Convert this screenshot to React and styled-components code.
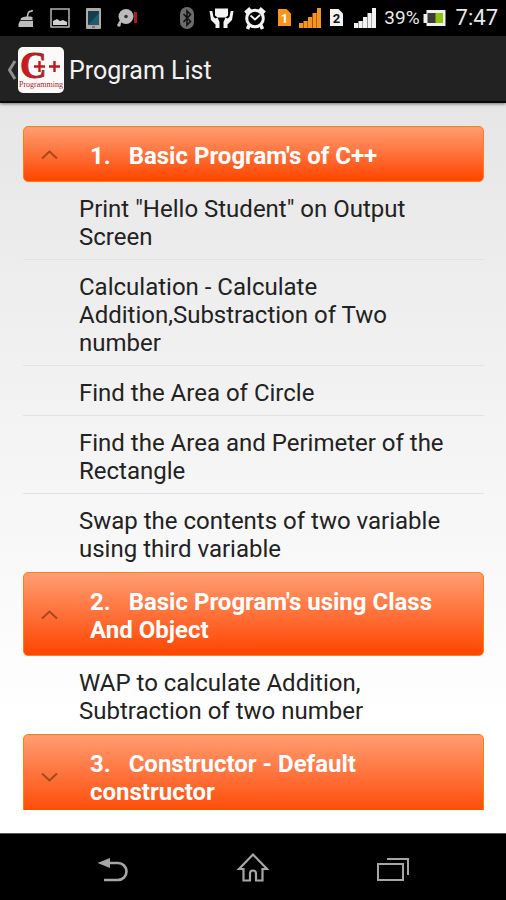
import { useState } from "react";
import styled, { createGlobalStyle } from "styled-components";

const GlobalStyle = createGlobalStyle`
  * {
    box-sizing: border-box;
  }

  body {
    margin: 0;
    font-family: Roboto, "Liberation Sans", sans-serif;
    background: #000;
  }

  h1, h2, ul {
    margin: 0;
    padding: 0;
  }
`;

const Screen = styled.div`
  display: flex;
  flex-direction: column;
  height: 100vh;
`;

const StatusBar = styled.div`
  display: flex;
  justify-content: space-between;
  align-items: center;
  height: 36px;
  padding: 0 8px 0 17px;
  background: #000;
  color: #e8e8e8;
`;

const IconGroup = styled.div`
  display: flex;
  align-items: center;
  gap: ${(props) => props.$gap}px;

  svg {
    display: block;
  }
`;

const Percent = styled.span`
  font-size: 19px;
  line-height: 36px;
`;

const Clock = styled.span`
  padding-left: 7px;
  font-size: 22px;
  line-height: 36px;
`;

const ActionBar = styled.header`
  position: relative;
  z-index: 1;
  display: flex;
  align-items: center;
  gap: 5px;
  height: 67px;
  padding: 2px 0 0 7px;
  background: #222;
  border-bottom: 2px solid #0a0a0a;
  box-shadow: 0 1px 3px rgba(0, 0, 0, 0.5);
`;

const UpLink = styled.a`
  display: flex;
  align-items: center;

  svg {
    display: block;
  }
`;

const Title = styled.h1`
  padding-top: 2px;
  color: #f3f3f3;
  font-size: 25px;
  font-weight: 400;
  line-height: 32px;
`;

const Content = styled.main`
  flex: 1;
  display: flex;
  min-height: 0;
  padding: 23px 22px 23px 23px;
  background: linear-gradient(#e6e6e6, #f2f2f2 40%, #fff 85%);
`;

const ProgramList = styled.div`
  flex: 1;
  overflow-y: auto;
  scrollbar-width: none;
`;

const GroupHeader = styled.button`
  display: flex;
  align-items: center;
  width: 100%;
  padding: 14px 16px 12px;
  border: 1px solid #ff7f0e;
  border-radius: 5px;
  background: linear-gradient(#ff9d73, #ff4500);
  color: #fff;
  font: bold 24px/28px Roboto, "Liberation Sans", sans-serif;
  text-align: left;
  cursor: pointer;

  svg {
    flex: none;
    margin-right: 32px;
  }
`;

const GroupTitle = styled.span`
  flex: 1;
  padding-top: 1px;
  margin-bottom: -1px;
  white-space: pre-wrap;
`;

const Items = styled.ul`
  list-style: none;
`;

const Item = styled.li`
  border-bottom: 1px solid #e2e2e2;

  &:last-child {
    border-bottom-color: transparent;
  }
`;

const ItemLink = styled.a`
  display: block;
  padding: 13px 16px 8px 56px;
  color: #222;
  font-size: 24px;
  line-height: 28px;
  text-decoration: none;
`;

const NavBar = styled.nav`
  display: flex;
  justify-content: center;
  gap: 76px;
  height: 67px;
  border-top: 1px solid #555;
  background: #000;
`;

const NavButton = styled.button`
  display: flex;
  align-items: center;
  justify-content: center;
  width: 64px;
  padding: 4px 0 0;
  border: 0;
  background: none;
`;

const groups = [
  {
    title: "Basic Program's of C++",
    items: [
      "Print \"Hello Student\" on Output Screen",
      "Calculation - Calculate Addition,Substraction of Two number",
      "Find the Area of Circle",
      "Find the Area and Perimeter of the Rectangle",
      "Swap the contents of two variable using third variable",
    ],
  },
  {
    title: "Basic Program's using Class And Object",
    items: ["WAP to calculate Addition, Subtraction of two number"],
  },
  {
    title: "Constructor - Default constructor",
    items: ["WAP to show the use of default constructor"],
  },
];

function CleanerIcon() {
  return (
    <svg width="17" height="20" viewBox="0 0 17 20" fill="#bdbdbd">
      <path d="M4 10.500c1-2 8-2.500 11.500-1.500V12H3.500z" />
      <path d="M3 12.800h13V19H1.500v-3z" />
      <path d="M10.500 10c0-4 1-6 2-6.500 1.500-.5 2.500.5 3-1.500" fill="none" stroke="#bdbdbd" strokeWidth="1.600" />
    </svg>
  );
}

function PictureIcon() {
  return (
    <svg width="20" height="20" viewBox="0 0 20 20">
      <rect x="1" y="1" width="18" height="18" fill="none" stroke="#b5b5b5" strokeWidth="1.500" />
      <path d="M3 17v-4l2-1 2-1 3 2 3-1 4 2v3z" fill="#d0d0d0" />
    </svg>
  );
}

function PhoneIcon() {
  return (
    <svg width="15" height="21" viewBox="0 0 15 21">
      <rect width="15" height="21" rx="1" fill="#b3aaa6" />
      <rect x="2" y="3" width="11" height="14" fill="#123f4d" />
      <path d="M2 17 13 5v12z" fill="#1e5b6c" />
      <rect x="6" y="18" width="3" height="2" fill="#777" />
    </svg>
  );
}

function DiscIcon() {
  return (
    <svg width="21" height="20" viewBox="0 0 21 20">
      <circle cx="9" cy="8.500" r="7.500" fill="#bcbcbc" />
      <circle cx="9" cy="8.500" r="1.800" fill="#333" />
      <path d="m4 13-2 3" stroke="#bcbcbc" strokeWidth="2.500" />
      <circle cx="2" cy="17" r="1.800" fill="#bcbcbc" />
      <path d="M18.500 4v11" stroke="#a3201c" strokeWidth="3" />
    </svg>
  );
}

function BluetoothIcon() {
  return (
    <svg width="21" height="22" viewBox="0 0 21 22">
      <rect width="14" height="22" rx="7" fill="#6b6b6b" />
      <path d="m3.500 7 7 7.500L7 18V4l3.500 3.500L3.500 15" fill="none" stroke="#111" strokeWidth="1.600" />
    </svg>
  );
}

function HandsIcon() {
  return (
    <svg width="27" height="22" viewBox="0 0 27 22" fill="#f4f4f4">
      <path d="M6 1.500h13v7l-2.500 2h-8L6 8.500z" />
      <path d="M0.500 4h2.800l1.200 6 2 1.500 2-1 2 4.500v6H6.500v-3.500L2 13z" />
      <path d="M24.500 4h-2.800l-1.200 6-2 1.500-2-1-2 4.500v6h4v-3.500L23 13z" />
    </svg>
  );
}

function AlarmIcon() {
  return (
    <svg width="25" height="24" viewBox="0 0 25 24" fill="none" stroke="#f4f4f4">
      <circle cx="11" cy="12.500" r="8.300" strokeWidth="3" />
      <path d="m6.500 9.500 4.500 4 5-4.500" strokeWidth="1.800" />
      <path d="M1.500 7 6.500 2.500M20.500 7l-5-4.500" strokeWidth="4" />
      <path d="M5 19.500 3.500 23M17 19.500l1.500 3.500" strokeWidth="3.500" />
    </svg>
  );
}

function SimIcon({ number, width, fill, color }) {
  return (
    <svg width={width} height="20" viewBox={`0 0 ${width} 20`}>
      <path d="M1 1h8.500L14 5.500V18H1z" fill={fill} />
      <text x="7.500" y="15" textAnchor="middle" fontSize="13" fontWeight="bold" fill={color}>
        {number}
      </text>
    </svg>
  );
}

function SignalIcon({ width, color }) {
  return (
    <svg width={width} height="22" viewBox="0 0 22 22" fill={color} preserveAspectRatio="xMinYMid">
      <rect x="0" y="16" width="4.200" height="5" />
      <rect x="4.500" y="14" width="4.200" height="7" />
      <rect x="9" y="10" width="4.200" height="11" />
      <rect x="13.500" y="6" width="4.200" height="15" />
      <rect x="18" y="1" width="4" height="20" />
    </svg>
  );
}

function BatteryIcon() {
  return (
    <svg width="23" height="18" viewBox="0 0 23 18">
      <path d="M3.500 1h19v16h-19v-3H0.500V5h3z" fill="#f0f0f0" />
      <rect x="4.500" y="4" width="9" height="10" fill="#3b3b3b" />
      <rect x="12.500" y="4" width="7.500" height="10" fill="#8cc80a" />
    </svg>
  );
}

function BackChevron() {
  return (
    <svg width="11" height="22" viewBox="0 0 11 22">
      <path d="M8 2 2.500 11 8 20" fill="none" stroke="#8f8f8f" strokeWidth="3" />
    </svg>
  );
}

function AppLogo() {
  return (
    <svg width="46" height="46" viewBox="0 0 46 46">
      <rect width="46" height="46" rx="5" fill="#fdf9f9" />
      <text
        x="2"
        y="31"
        fontFamily="Liberation Serif, serif"
        fontSize="37"
        fontWeight="bold"
        fill="#d3161b"
        stroke="#8d2a2c"
        strokeWidth="0.800"
      >
        C
      </text>
      <path d="M16 19.500h11M21.500 14v11M31 19.500h11M36.500 14v11" stroke="#c0161b" strokeWidth="2.400" />
      <text
        x="23"
        y="40"
        textAnchor="middle"
        fontFamily="Liberation Serif, serif"
        fontSize="8"
        fill="#a3262a"
      >
        Programming
      </text>
    </svg>
  );
}

function GroupArrow({ open }) {
  return (
    <svg width="18" height="12" viewBox="0 0 18 12">
      <path
        d={open ? "M2 9.500 9.500 2.500 17 9.500" : "M2 2.500 9.500 9.500 17 2.500"}
        fill="none"
        stroke="#7a3a10"
        strokeOpacity="0.700"
        strokeWidth="2"
      />
    </svg>
  );
}

function Group({ number, title, items, defaultOpen }) {
  const [open, setOpen] = useState(defaultOpen);

  return (
    <section>
      <GroupHeader type="button" aria-expanded={open} onClick={() => setOpen(!open)}>
        <GroupArrow open={open} />
        <GroupTitle>{`${number}.\u00a0\u00a0 ${title}`}</GroupTitle>
      </GroupHeader>
      {open && (
        <Items>
          {items.map((item) => (
            <Item key={item}>
              <ItemLink href="#">{item}</ItemLink>
            </Item>
          ))}
        </Items>
      )}
    </section>
  );
}

export default function App() {
  return (
    <Screen>
      <GlobalStyle />
      <StatusBar>
        <IconGroup $gap={16}>
          <CleanerIcon />
          <PictureIcon />
          <PhoneIcon />
          <DiscIcon />
        </IconGroup>
        <IconGroup $gap={8}>
          <BluetoothIcon />
          <HandsIcon />
          <AlarmIcon />
          <SimIcon number="1" width={14} fill="#f7941d" color="#fff" />
          <SignalIcon width={22} color="#f7941d" />
          <SimIcon number="2" width={17} fill="#f2f2f2" color="#111" />
          <SignalIcon width={22} color="#f2f2f2" />
          <IconGroup $gap={3}>
            <Percent>39%</Percent>
            <BatteryIcon />
            <Clock>7:47</Clock>
          </IconGroup>
        </IconGroup>
      </StatusBar>
      <ActionBar>
        <UpLink href="#" aria-label="Back">
          <BackChevron />
          <AppLogo />
        </UpLink>
        <Title>Program List</Title>
      </ActionBar>
      <Content>
        <ProgramList>
          {groups.map((group, index) => (
            <Group
              key={group.title}
              number={index + 1}
              title={group.title}
              items={group.items}
              defaultOpen={index < 2}
            />
          ))}
        </ProgramList>
      </Content>
      <NavBar>
        <NavButton type="button" aria-label="Back">
          <svg width="32" height="26" viewBox="0 0 32 26">
            <path d="M10 7h11a8.500 8.500 0 0 1 0 17H7" fill="none" stroke="#a6a6a6" strokeWidth="2.600" />
            <path d="M0.500 7 13 2v10z" fill="#a6a6a6" />
          </svg>
        </NavButton>
        <NavButton type="button" aria-label="Home">
          <svg width="34" height="34" viewBox="0 0 34 34">
            <path
              d="M17 2.500 3 17h4.500v11.500H14v-7a3 3 0 0 1 6 0v7h6.500V17H31z"
              fill="none"
              stroke="#a6a6a6"
              strokeWidth="2.200"
            />
          </svg>
        </NavButton>
        <NavButton type="button" aria-label="Recent apps">
          <svg width="34" height="26" viewBox="0 0 34 26" fill="none" stroke="#a6a6a6" strokeWidth="2">
            <rect x="2" y="8" width="25" height="16" />
            <path d="M11 3h21v16" />
          </svg>
        </NavButton>
      </NavBar>
    </Screen>
  );
}
